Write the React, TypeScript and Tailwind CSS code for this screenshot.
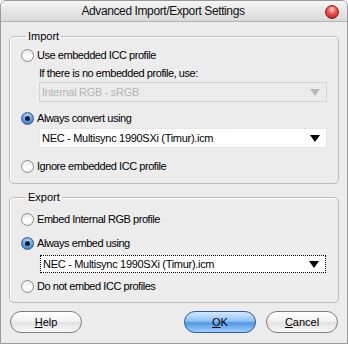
import React from "react";

const font = { fontFamily: '"Liberation Sans", Arial, sans-serif' };

function Radio({ checked, label }: { checked?: boolean; label: string }) {
  return (
    <div className="flex items-center h-[16px]">
      {checked ? (
        <div className="w-[13px] h-[13px] rounded-full border border-[#3a5f93] bg-[radial-gradient(circle_at_50%_35%,#d8ecff_0%,#6fa9e8_45%,#1f5fb4_100%)] flex items-center justify-center">
          <div className="w-[5px] h-[5px] rounded-full bg-[#0b1a33]" />
        </div>
      ) : (
        <div className="w-[13px] h-[13px] rounded-full border border-[#8d8d8d] bg-[linear-gradient(180deg,#e4e4e4_0%,#ffffff_60%,#f2f2f2_100%)]" />
      )}
      <span className="ml-[3px] text-[11px] tracking-[-0.45px] text-black">{label}</span>
    </div>
  );
}

function Select({ text, disabled, focus }: { text: string; disabled?: boolean; focus?: boolean }) {
  return (
    <div
      className={
        "h-[20px] flex items-center border " +
        (disabled ? "bg-[#ececec] border-[#d4d4d4]" : "bg-white border-[#e6e6e6]")
      }
    >
      <div
        className={
          "flex-1 h-full flex items-center pl-[2px] pr-[6px] " +
          (focus ? "border border-dotted border-black" : "")
        }
      >
        <span className={"flex-1 text-[11px] tracking-[-0.3px] " + (disabled ? "text-[#b4b4b4]" : "text-black")}>{text}</span>
        <svg width="10" height="7" viewBox="0 0 10 7">
          <polygon points="0,0 10,0 5,7" fill={disabled ? "#b8b8b8" : "#000"} />
        </svg>
      </div>
    </div>
  );
}

function Btn({ label, u, primary }: { label: string; u: string; primary?: boolean }) {
  const rest = label.slice(1);
  return (
    <div
      className={
        "w-[72px] h-[22px] rounded-full border flex items-center justify-center text-[11px] " +
        (primary
          ? "border-[#2c5a9a] bg-[linear-gradient(180deg,#d6eaff_0%,#8fc2f5_45%,#4f97e3_55%,#9fd0ff_100%)]"
          : "border-[#7e7e7e] bg-[linear-gradient(180deg,#ffffff_0%,#f2f2f2_45%,#e2e2e2_55%,#fafafa_100%)]")
      }
    >
      <span>
        <span className="underline">{u}</span>
        {rest}
      </span>
    </div>
  );
}

export default function App() {
  return (
    <div style={font} className="w-[348px] h-[344px] bg-[#ececec] border border-[#9a9a9a] rounded-t-[6px] flex flex-col text-black overflow-hidden">
      <div className="relative h-[21px] flex items-center justify-center pr-[22px] bg-[linear-gradient(180deg,#f6f6f6_0%,#e6e6e6_50%,#d9d9d9_100%)] border-b border-[#b4b4b4]">
        <span className="text-[12px] tracking-[-0.4px] text-[#111]">Advanced Import/Export Settings</span>
        <div className="absolute right-[8px] top-[4px] w-[14px] h-[14px] rounded-full border border-[#8a1f1f] bg-[radial-gradient(circle_at_50%_30%,#ffd6d6_0%,#f25454_40%,#b51010_100%)]" />
      </div>

      <fieldset className="mx-[8px] mt-[8px] border border-[#bdbdbd] shadow-[inset_1px_1px_0_#ffffff] rounded-[5px] px-[11px] pb-[9px]">
        <legend className="ml-[5px] px-[2px] text-[11px] leading-[13px]">Import</legend>
        <div className="mt-[4px]">
          <Radio label="Use embedded ICC profile" />
          <div className="pl-[18px] mt-[3px] h-[14px] flex items-center text-[11px] tracking-[-0.45px]">If there is no embedded profile, use:</div>
          <div className="ml-[18px] mt-[2px]">
            <Select text="Internal RGB - sRGB" disabled />
          </div>
          <div className="mt-[8px]">
            <Radio checked label="Always convert using" />
          </div>
          <div className="ml-[18px] mt-[2px]">
            <Select text="NEC - Multisync 1990SXi (Timur).icm" />
          </div>
          <div className="mt-[10px]">
            <Radio label="Ignore embedded ICC profile" />
          </div>
        </div>
      </fieldset>

      <fieldset className="mx-[8px] mt-[7px] border border-[#bdbdbd] shadow-[inset_1px_1px_0_#ffffff] rounded-[5px] px-[11px] pb-[8px]">
        <legend className="ml-[5px] px-[2px] text-[11px] leading-[13px]">Export</legend>
        <div className="mt-[7px]">
          <Radio label="Embed Internal RGB profile" />
          <div className="mt-[8px]">
            <Radio checked label="Always embed using" />
          </div>
          <div className="ml-[18px] mt-[3px]">
            <Select text="NEC - Multisync 1990SXi (Timur).icm" focus />
          </div>
          <div className="mt-[4px]">
            <Radio label="Do not embed ICC profiles" />
          </div>
        </div>
      </fieldset>

      <div className="flex items-center mt-[8px] px-[9px]">
        <Btn label="Help" u="H" />
        <div className="flex-1" />
        <Btn label="OK" u="O" primary />
        <div className="w-[10px]" />
        <Btn label="Cancel" u="C" />
      </div>
    </div>
  );
}
